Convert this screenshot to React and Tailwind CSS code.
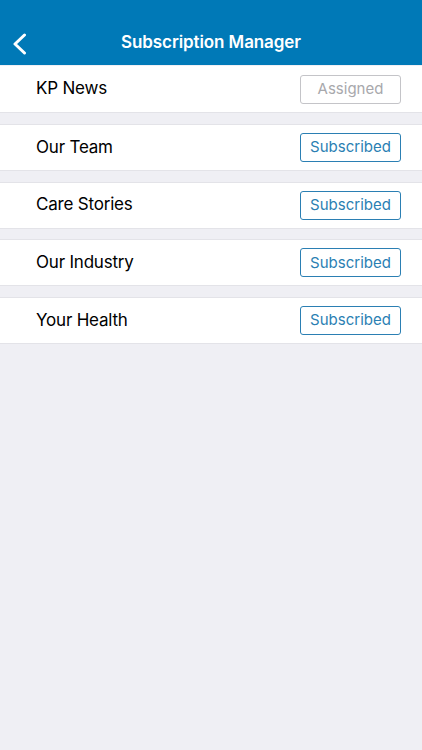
import React from "react";

const items = [
  { name: "KP News", status: "Assigned" },
  { name: "Our Team", status: "Subscribed" },
  { name: "Care Stories", status: "Subscribed" },
  { name: "Our Industry", status: "Subscribed" },
  { name: "Your Health", status: "Subscribed" },
];

export default function App() {
  return (
    <div
      className="w-[422px] h-[750px] bg-[#efeff4] overflow-hidden"
      style={{ fontFamily: "Inter, 'Open Sans', 'Liberation Sans', sans-serif" }}
    >
      <div className="h-[65px] bg-[#0079b7] relative flex items-end justify-center pb-[12px]">
        <svg
          className="absolute left-[12px] top-[33px]"
          width="16"
          height="22"
          viewBox="0 0 16 22"
          fill="none"
        >
          <path d="M12.5 2 L3 11 L12.5 20" stroke="white" strokeWidth="3" strokeLinecap="round" strokeLinejoin="round" />
        </svg>
        <span className="text-white font-semibold text-[17px] leading-[22px] tracking-[-0.1px]">
          Subscription Manager
        </span>
      </div>
      <div className="flex flex-col pt-[1px]">
        {items.map((it, i) => (
          <div
            key={it.name}
            className={`h-[47px] bg-white flex items-center justify-between pl-[36px] pr-[21px] border-b border-[#e3e3e8] ${i > 0 ? "border-t mt-[10.75px]" : ""}`}
          >
            <span className="text-[17px] text-black tracking-[-0.2px]">{it.name}</span>
            {it.status === "Assigned" ? (
              <span className="w-[101px] h-[29px] rounded-[3px] border border-[#c4c4c8] text-[#a8a8ac] text-[15px] flex items-center justify-center">
                Assigned
              </span>
            ) : (
              <span className="w-[101px] h-[29px] rounded-[3px] border border-[#2b7fb3] text-[#2b7fb3] text-[15px] flex items-center justify-center">
                Subscribed
              </span>
            )}
          </div>
        ))}
      </div>
    </div>
  );
}
